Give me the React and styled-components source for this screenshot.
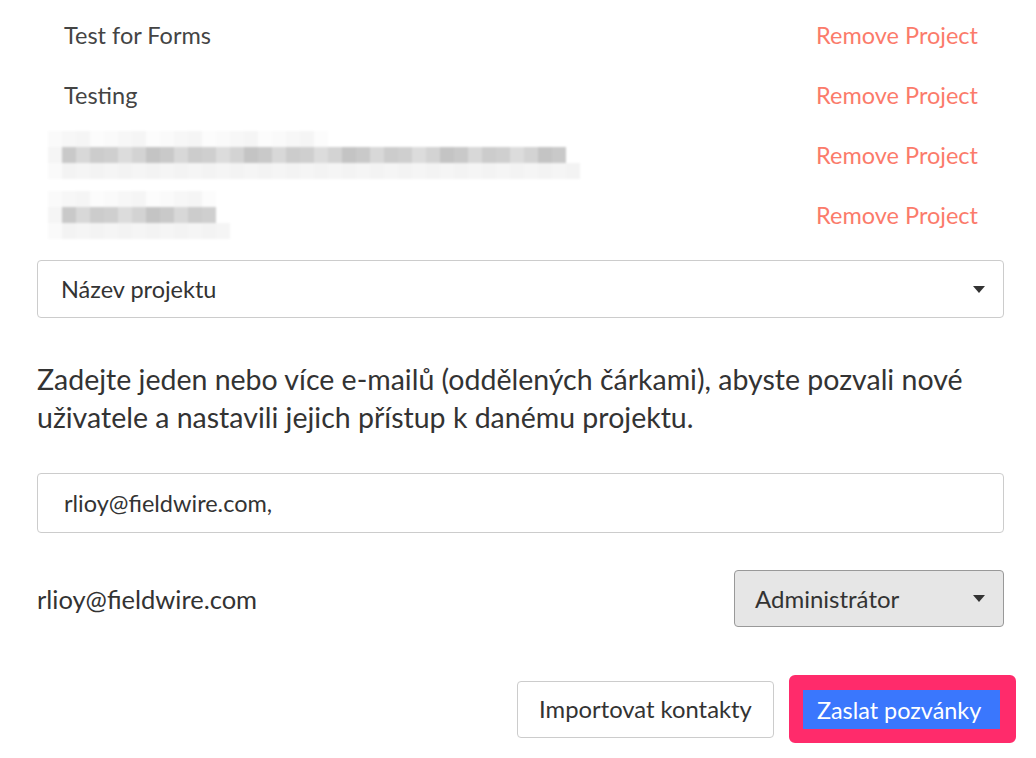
import React from 'react'
import styled, { createGlobalStyle } from 'styled-components'

const colors = {
  text: '#333333',
  remove: '#fb7b6b',
  border: '#cccccc',
  pink: '#ff2b6b',
  blue: '#3a77fd',
}

const GlobalStyle = createGlobalStyle`
  body {
    margin: 0;
    background: #fff;
    font-family: Lato, "Open Sans", "Liberation Sans", sans-serif;
    color: ${colors.text};
  }
`

const Page = styled.div`
  width: 1036px;
  height: 758px;
  box-sizing: border-box;
  padding: 5px 32px 0 37px;
  overflow: hidden;
`

const ProjectList = styled.div`
  display: flex;
  flex-direction: column;
`

const ProjectRow = styled.div`
  height: 60px;
  display: flex;
  align-items: center;
  justify-content: space-between;
  padding: 0 27px 0 27px;
  font-size: 23.5px;
`

const ProjectName = styled.span`
  color: #444;
`

const RemoveLink = styled.span`
  color: ${colors.remove};
  margin-right: -1px;
`

const Blurred = styled.div`
  display: flex;
  flex-direction: column;
  margin-left: -16px;
  filter: blur(1px);
`

const BlurLine = styled.div`
  display: flex;
  height: 16px;
`

const BlurCell = styled.div`
  width: 14px;
  height: 16px;
`

const Select = styled.div`
  margin-top: 15px;
  height: 58px;
  box-sizing: border-box;
  border: 1px solid ${colors.border};
  border-radius: 4px;
  display: flex;
  align-items: center;
  justify-content: space-between;
  padding: 0 18px 0 23px;
  font-size: 23.5px;
  background: ${({ $muted }) => ($muted ? '#e6e6e6' : '#fff')};
`

const Caret = styled.span`
  width: 0;
  height: 0;
  border-left: 6px solid transparent;
  border-right: 6px solid transparent;
  border-top: 7px solid #333;
`

const Intro = styled.p`
  margin: 42px 0 0;
  font-size: 28.5px;
  line-height: 38px;
  color: #333;
`

const EmailInput = styled.div`
  margin-top: 37px;
  height: 60px;
  box-sizing: border-box;
  border: 1px solid ${colors.border};
  border-radius: 4px;
  display: flex;
  align-items: center;
  padding-left: 26px;
  font-size: 23.5px;
`

const InviteRow = styled.div`
  margin-top: 37px;
  display: flex;
  align-items: center;
  justify-content: space-between;
  font-size: 25.5px;
`

const RoleSelect = styled(Select)`
  margin-top: 0;
  width: 270px;
  height: 57px;
  border-color: #999;
  padding: 0 18px 0 20px;
  font-size: 24px;
`

const Actions = styled.div`
  margin-top: 48px;
  margin-right: -12px;
  display: flex;
  justify-content: flex-end;
  align-items: center;
  gap: 15px;
`

const Button = styled.button`
  font-family: inherit;
  font-size: 23.8px;
  cursor: pointer;
  border-radius: 4px;
  border: 1px solid ${colors.border};
  background: #fff;
  color: #333;
  height: 57px;
  width: 257px;
  padding: 0;
`

const Highlight = styled.div`
  border-style: solid;
  border-color: ${colors.pink};
  border-width: 15px 16px 14px 14px;
  border-radius: 6px;
  display: flex;
`

const PrimaryButton = styled(Button)`
  border: none;
  border-radius: 0;
  background: ${colors.blue};
  color: #fff;
  height: 39px;
  width: 197px;
  padding: 0 0 0 14px;
  text-align: left;
  font-size: 23.4px;
`

const grays = ['#c9c9c9', '#d3d3d3', '#cfcfcf', '#d8d8d8', '#c4c4c4', '#dcdcdc', '#cccccc']
const lights = ['#f0f0f0', '#ececec', '#f3f3f3', '#e8e8e8', '#eeeeee', '#f5f5f5']

function BlurBlock({ dark, light, faint }) {
  const line = (n, set, offset) =>
    Array.from({ length: n }, (_, i) => (
      <BlurCell key={i} style={{ background: set[(i * 3 + offset) % set.length] }} />
    ))
  return (
    <Blurred>
      <BlurLine>{line(faint, ['#f7f7f7', '#fafafa', '#fcfcfc', '#f5f5f5'], 1)}</BlurLine>
      <BlurLine>
        <BlurCell style={{ background: '#f5f5f5' }} />
        {line(dark, grays, 0)}
      </BlurLine>
      <BlurLine>
        <BlurCell style={{ background: '#fafafa' }} />
        {line(light, lights, 2)}
      </BlurLine>
    </Blurred>
  )
}

const projects = [
  { id: 1, name: 'Test for Forms' },
  { id: 2, name: 'Testing' },
  { id: 3, blur: { dark: 36, light: 37, faint: 20 } },
  { id: 4, blur: { dark: 11, light: 12, faint: 12 } },
]

export default function App() {
  return (
    <Page>
      <GlobalStyle />
      <ProjectList>
        {projects.map((p) => (
          <ProjectRow key={p.id}>
            {p.blur ? <BlurBlock {...p.blur} /> : <ProjectName>{p.name}</ProjectName>}
            <RemoveLink>Remove Project</RemoveLink>
          </ProjectRow>
        ))}
      </ProjectList>
      <Select>
        <span>Název projektu</span>
        <Caret />
      </Select>
      <Intro>
        Zadejte jeden nebo více e-mailů (oddělených čárkami), abyste pozvali nové uživatele a
        nastavili jejich přístup k danému projektu.
      </Intro>
      <EmailInput>rlioy@fieldwire.com,</EmailInput>
      <InviteRow>
        <span>rlioy@fieldwire.com</span>
        <RoleSelect $muted>
          <span>Administrátor</span>
          <Caret />
        </RoleSelect>
      </InviteRow>
      <Actions>
        <Button>Importovat kontakty</Button>
        <Highlight>
          <PrimaryButton>Zaslat pozvánky</PrimaryButton>
        </Highlight>
      </Actions>
    </Page>
  )
}
